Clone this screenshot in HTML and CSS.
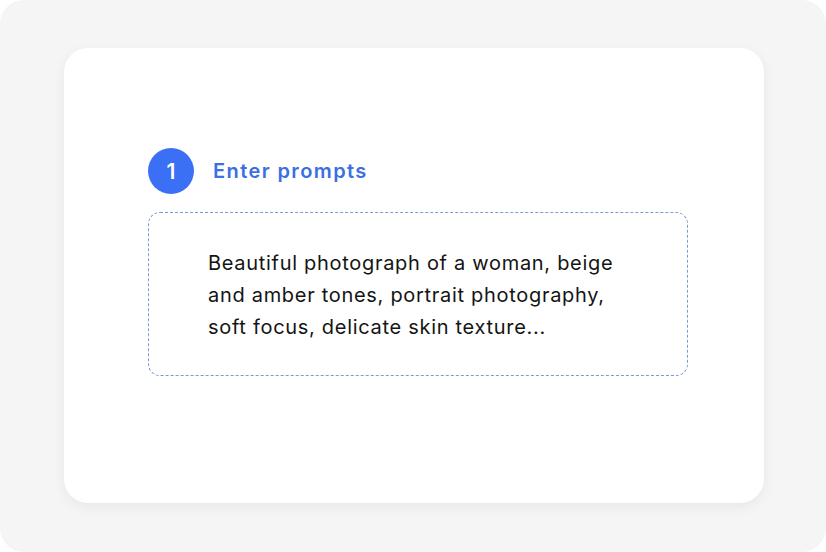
FILE: index.html
```html
<!DOCTYPE html>
<html>
<head>
<meta charset="utf-8">
<link rel="stylesheet" href="styles.css">
</head>
<body>
<div class="frame">
  <div class="card">
    <div class="step">
      <div class="num">1</div>
      <div class="title">Enter prompts</div>
    </div>
    <div class="prompt">
      <p>Beautiful photograph of a woman, beige and amber tones, portrait photography, soft focus, delicate skin texture...</p>
    </div>
  </div>
</div>
</body>
</html>
```
FILE: styles.css
```css
html, body { margin: 0; padding: 0; background: #fff; }
body { width: 826px; height: 552px; overflow: hidden; font-family: Inter, "Noto Sans", sans-serif; }
.frame {
  width: 826px; height: 552px; box-sizing: border-box;
  background: #f5f5f5; border-radius: 24px;
  padding: 48px 62px 49px 64px;
}
.card {
  height: 100%; box-sizing: border-box;
  background: #fff; border-radius: 24px;
  box-shadow: 0 4px 14px rgba(0,0,0,0.06);
  padding: 100px 76px 0 84px;
}
.step { display: flex; align-items: center; gap: 19px; }
.num {
  width: 46px; height: 46px; border-radius: 50%;
  background: #3a6ff6; color: #fff;
  display: flex; align-items: center; justify-content: center;
  font-size: 21px; font-weight: 600;
}
.title { color: #3b6fe3; font-size: 20px; font-weight: 600; letter-spacing: 1.4px; }
.prompt {
  margin-top: 18px; height: 164px; box-sizing: border-box;
  border: 1px dashed #7d9ad2; border-radius: 12px;
  padding: 34px 60px 0 59px;
}
.prompt p { margin: 0; width: 415px; font-size: 20px; line-height: 32px; letter-spacing: 0.7px; color: #141414; }
```
